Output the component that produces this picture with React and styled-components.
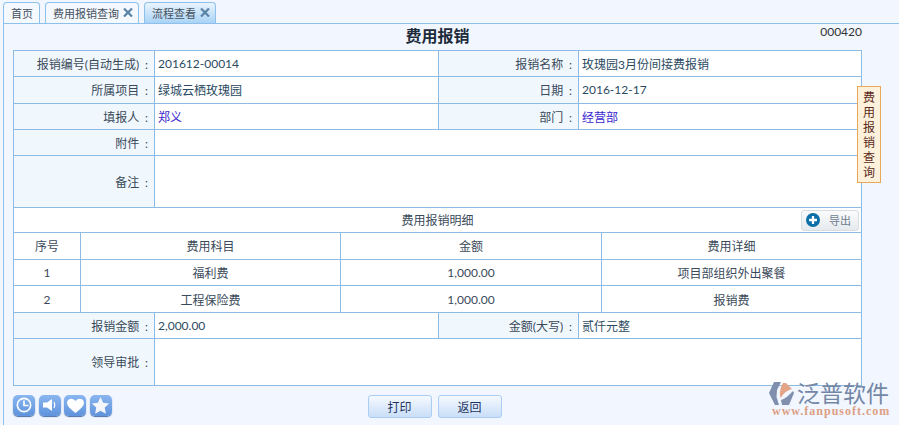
import React from "react";
import styled, { createGlobalStyle } from "styled-components";

const GlobalStyle = createGlobalStyle`
  html, body { margin: 0; padding: 0; background: #f1f6ff; overflow: hidden; }
  body { font-family: "Lato", "Noto Sans CJK SC", sans-serif; font-size: 12px; color: #2b3f55; }
`;

const tabs = [
  { label: "首页" },
  { label: "费用报销查询", close: true },
  { label: "流程查看", close: true, active: true },
];

const App = () => (
  <Page>
    <GlobalStyle />
    <TabBar>
      {tabs.map((t) => (
        <Tab key={t.label} $active={t.active}>
          {t.label}
          {t.close && (
            <svg width="10" height="9" viewBox="0 0 10 9">
              <path d="M1 .5l8 8M9 .5l-8 8" stroke="#5a83a8" strokeWidth="2.2" />
            </svg>
          )}
        </Tab>
      ))}
    </TabBar>
    <Content>
      <TitleRow>
        <Title>费用报销</Title>
        <Code>000420</Code>
      </TitleRow>
      <Form>
        <FourCols $row={26.34}>
          <Label>报销编号(自动生成) :</Label>
          <Value>201612-00014</Value>
          <Label>报销名称 :</Label>
          <Value>玫瑰园3月份间接费报销</Value>
          <Label>所属项目 :</Label>
          <Value>绿城云栖玫瑰园</Value>
          <Label>日期 :</Label>
          <Value>2016-12-17</Value>
          <Label>填报人 :</Label>
          <Value $link>郑义</Value>
          <Label>部门 :</Label>
          <Value $link>经营部</Value>
        </FourCols>
        <TwoCols $h={26}>
          <Label>附件 :</Label>
          <Value />
        </TwoCols>
        <TwoCols $h={52}>
          <Label>备注 :</Label>
          <Value />
        </TwoCols>
        <DetailHead>
          费用报销明细
          <ExportButton>
            <svg width="14" height="14" viewBox="0 0 16 16">
              <circle cx="8" cy="8" r="8" fill="#0b6fa8" />
              <path d="M8 3.500v9M3.500 8h9" stroke="#fff" strokeWidth="2.6" />
            </svg>
            <span>导出</span>
          </ExportButton>
        </DetailHead>
        <DetailGrid>
          <Cell>序号</Cell>
          <Cell>费用科目</Cell>
          <Cell>金额</Cell>
          <Cell>费用详细</Cell>
          <Cell>1</Cell>
          <Cell>福利费</Cell>
          <Cell>1,000.00</Cell>
          <Cell>项目部组织外出聚餐</Cell>
          <Cell>2</Cell>
          <Cell>工程保险费</Cell>
          <Cell>1,000.00</Cell>
          <Cell>报销费</Cell>
        </DetailGrid>
        <FourCols $row={26}>
          <Label>报销金额 :</Label>
          <Value>2,000.00</Value>
          <Label>金额(大写) :</Label>
          <Value>贰仟元整</Value>
        </FourCols>
        <TwoCols $h={47}>
          <Label>领导审批 :</Label>
          <Value />
        </TwoCols>
      </Form>
      <Footer>
        <IconGroup>
          <IconButton>
            <svg width="16" height="16" viewBox="0 0 18 18" fill="none" stroke="#fff" strokeWidth="1.800">
              <circle cx="9" cy="9" r="7.500" />
              <path d="M9 4v5.500h5" />
            </svg>
          </IconButton>
          <IconButton>
            <svg width="18" height="18" viewBox="0 0 18 18" fill="#fff">
              <path d="M2 6.500h4L11 3v12L6 11.500H2z" />
              <path d="M13 6c1 1.800 1 4.200 0 6" stroke="#fff" strokeWidth="1.200" fill="none" />
            </svg>
          </IconButton>
          <IconButton>
            <svg width="19" height="19" viewBox="0 0 18 18" fill="#fff">
              <path d="M9 16C4 12 1 9.500 1 6.300 1 3.800 3 2.500 5 2.500c1.800 0 3.200 1 4 2.300.8-1.300 2.200-2.300 4-2.300 2 0 4 1.300 4 3.800C17 9.500 14 12 9 16z" />
            </svg>
          </IconButton>
          <IconButton>
            <svg width="19" height="19" viewBox="0 0 18 18" fill="#f4f6fa">
              <path d="M9 1l2.500 5.300 5.700.7-4.200 4 1.100 5.700L9 14l-5.100 2.700L5 11 .8 7l5.700-.7z" />
            </svg>
          </IconButton>
        </IconGroup>
        <Actions>
          <ActionButton>打印</ActionButton>
          <ActionButton>返回</ActionButton>
        </Actions>
      </Footer>
      <SideTab>费用报销查询</SideTab>
      <Logo>
        <LogoTop>
          <svg width="26" height="23" viewBox="0 0 26 23">
            <path d="M5 0h7L8 8 7.500 15l2.500 8H6L0 11z" fill="#7f8fad" />
            <path d="M14 1h3l6 6c-4 1-9 4-11 9-2-4-1-10 2-15z" fill="#e3a487" />
            <path d="M24 9l1 2-5 12h-7l-1-5c4-1 8-5 12-9z" fill="#7f8fad" />
          </svg>
          <LogoName>泛普软件</LogoName>
        </LogoTop>
        <LogoUrl>www.fanpusoft.com</LogoUrl>
      </Logo>
    </Content>
  </Page>
);

export default App;

const Page = styled.div`
  width: 899px;
  height: 425px;
  overflow: hidden;
`;

const TabBar = styled.div`
  height: 23px;
  box-sizing: border-box;
  padding: 2px 0 0 3px;
  display: flex;
  gap: 5px;
  align-items: flex-end;
`;

const Tab = styled.div`
  height: 21px;
  box-sizing: border-box;
  padding: 3px 6px 0 7px;
  border: 1px solid #8dc0ea;
  border-bottom: none;
  border-radius: 4px 4px 0 0;
  background: ${(p) => (p.$active ? "linear-gradient(#e9f4fe, #a9d3f5)" : "#f4f8ff")};
  color: #44505c;
  font-size: 11px;
  line-height: 15px;
  white-space: nowrap;
  display: flex;
  gap: 4px;

  svg {
    margin: 2px -1px 0 0;
  }
`;

const Content = styled.div`
  position: relative;
  height: 402px;
  margin-left: 3px;
  border-top: 1px solid #8dc0ea;
  border-left: 1px solid #8dc0ea;
  padding: 0 0 0 9px;
`;

const TitleRow = styled.div`
  position: relative;
  width: 849px;
  height: 26px;
  text-align: center;
`;

const Title = styled.div`
  font-size: 16px;
  font-weight: bold;
  line-height: 23px;
  color: #1d2b3a;
`;

const Code = styled.div`
  position: absolute;
  right: 0;
  top: 1px;
  line-height: 14px;
  color: #333;
`;

const Form = styled.div`
  width: 849px;
  box-sizing: border-box;
  border: 1px solid #8dbbe3;
  border-bottom: none;
  background: #fff;
`;

const FourCols = styled.div`
  display: grid;
  grid-template-columns: 141px 284px 140px 1fr;
  grid-auto-rows: ${(p) => p.$row}px;
`;

const TwoCols = styled.div`
  display: grid;
  grid-template-columns: 141px 1fr;
  height: ${(p) => p.$h}px;
`;

const Label = styled.div`
  box-sizing: border-box;
  background: #f0f7fd;
  border-right: 1px solid #8dbbe3;
  border-bottom: 1px solid #8dbbe3;
  display: flex;
  align-items: center;
  justify-content: flex-end;
  padding-right: 6px;
  color: #3a4a5a;
  word-spacing: 2.700px;
`;

const Value = styled.div`
  box-sizing: border-box;
  background: #fff;
  border-right: 1px solid #8dbbe3;
  border-bottom: 1px solid #8dbbe3;
  display: flex;
  align-items: center;
  padding-left: 3px;
  color: ${(p) => (p.$link ? "#3a1fd0" : "#2b4a62")};
  &:last-child { border-right: none; }
  &:nth-child(4n) { border-right: none; }
`;

const DetailHead = styled.div`
  position: relative;
  height: 25px;
  box-sizing: border-box;
  border-bottom: 1px solid #8dbbe3;
  display: flex;
  align-items: center;
  justify-content: center;
  color: #3a4a5a;
`;

const ExportButton = styled.div`
  position: absolute;
  right: 2px;
  top: 2px;
  width: 58px;
  height: 21px;
  box-sizing: border-box;
  border: 1px solid #d8dde2;
  border-radius: 3px;
  background: linear-gradient(#fafbfc, #e6eaee);
  display: flex;
  align-items: center;
  gap: 9px;
  padding-left: 4px;
  color: #6f7f8e;
  font-size: 11px;
`;

const DetailGrid = styled.div`
  display: grid;
  grid-template-columns: 67px 260px 261px 1fr;
  grid-auto-rows: 26.670px;
`;

const Cell = styled.div`
  box-sizing: border-box;
  border-right: 1px solid #8dbbe3;
  border-bottom: 1px solid #8dbbe3;
  display: flex;
  align-items: center;
  justify-content: center;
  color: #3a4a5a;
  &:nth-child(4n) { border-right: none; }
`;

const Footer = styled.div`
  position: relative;
  width: 849px;
  height: 26px;
  box-sizing: border-box;
  padding-right: 6px;
  margin-top: 9px;
  display: flex;
  justify-content: center;
`;

const IconGroup = styled.div`
  position: absolute;
  left: 0;
  top: 0;
  display: flex;
  gap: 3.500px;
`;

const IconButton = styled.div`
  width: 22px;
  height: 21px;
  border-radius: 5px;
  background: linear-gradient(#8ab6f0, #5f93dc);
  box-shadow: 0 1px 1px #4a6fa8;
  display: flex;
  align-items: center;
  justify-content: center;
`;

const Actions = styled.div`
  display: flex;
  gap: 6px;
`;

const ActionButton = styled.div`
  width: 64px;
  height: 23px;
  box-sizing: border-box;
  border: 1px solid #a9cdf5;
  border-radius: 3px;
  background: linear-gradient(#f5f9ff, #c9def8);
  display: flex;
  align-items: center;
  justify-content: center;
  color: #1d3560;
`;

const SideTab = styled.div`
  position: absolute;
  left: 853px;
  top: 62px;
  width: 24px;
  height: 97px;
  box-sizing: border-box;
  border: 1px solid #e8a858;
  background: #fdf1dc;
  color: #5a2a20;
  line-height: 15px;
  text-align: center;
  padding: 3px 5px;
`;

const Logo = styled.div`
  position: absolute;
  left: 765px;
  top: 357px;
  width: 125px;
`;

const LogoTop = styled.div`
  display: flex;
  align-items: center;
  gap: 2px;
`;

const LogoName = styled.div`
  font-size: 23px;
  line-height: 24px;
  color: #7488a6;
  white-space: nowrap;
`;

const LogoUrl = styled.div`
  font-family: "Liberation Serif", serif;
  font-size: 12px;
  font-weight: bold;
  letter-spacing: 1px;
  margin-left: 3px;
  color: #dd9f85;
  line-height: 12px;
  white-space: nowrap;
`;
